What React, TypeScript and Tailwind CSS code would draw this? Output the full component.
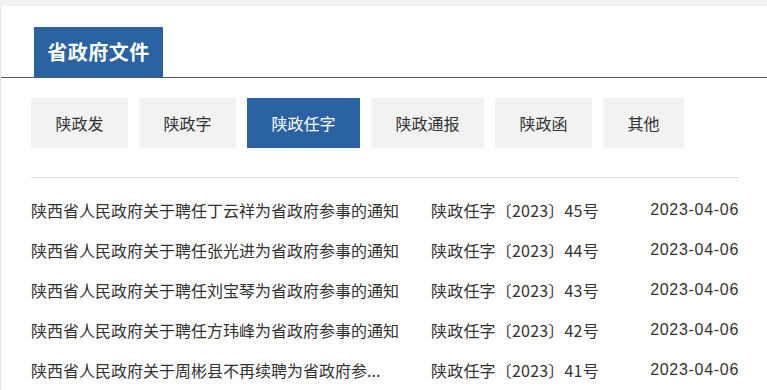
import { useState } from 'react'

const tabs = ['陕政发', '陕政字', '陕政任字', '陕政通报', '陕政函', '其他']

const docs = [
  { title: '陕西省人民政府关于聘任丁云祥为省政府参事的通知', no: '陕政任字〔2023〕45号', date: '2023-04-06' },
  { title: '陕西省人民政府关于聘任张光进为省政府参事的通知', no: '陕政任字〔2023〕44号', date: '2023-04-06' },
  { title: '陕西省人民政府关于聘任刘宝琴为省政府参事的通知', no: '陕政任字〔2023〕43号', date: '2023-04-06' },
  { title: '陕西省人民政府关于聘任方玮峰为省政府参事的通知', no: '陕政任字〔2023〕42号', date: '2023-04-06' },
  { title: '陕西省人民政府关于周彬县不再续聘为省政府参...', no: '陕政任字〔2023〕41号', date: '2023-04-06' },
]

export default function App() {
  const [active, setActive] = useState(2)

  return (
    <div
      className="w-[767px] h-[390px] overflow-hidden bg-[#f3f3f3] pt-[6px]"
      style={{ fontFamily: '"Microsoft YaHei", "Noto Sans CJK SC", sans-serif' }}
    >
      <div className="h-full bg-white border-l border-[#e6e6e6] pt-[21px]">
        {/* header */}
        <div className="border-b-[1.5px] border-[#4e5a66] pl-[33px]">
          <div className="w-[129px] h-[50px] bg-[#2a62a2] text-white text-[20px] font-bold flex items-center justify-center tracking-[0.5px]">
            省政府文件
          </div>
        </div>

        <div className="pl-[30px] pr-[28px]">
          {/* sub tabs */}
          <div className="flex gap-[11px] mt-[20px]">
            {tabs.map((t, i) => (
              <button
                key={t}
                onClick={() => setActive(i)}
                className={
                  i === active
                    ? 'h-[50px] px-[24.5px] text-[16px] bg-[#2a62a2] text-white'
                    : 'h-[50px] px-[24.5px] text-[16px] bg-[#f2f2f2] text-[#333]'
                }
              >
                {t}
              </button>
            ))}
          </div>

          <div className="mt-[29px] h-px bg-[#dcdcdc]" />

          {/* list */}
          <div className="pt-[12px]">
            {docs.map((d) => (
              <div key={d.no} className="flex items-center h-[40px] text-[16px] text-[#333]">
                <div className="w-[368px] whitespace-nowrap">{d.title}</div>
                <div className="ml-[32px] tracking-[0.2px]">{d.no}</div>
                <div
                  className="ml-auto tracking-[0.7px]"
                  style={{ fontFamily: '"Liberation Sans", "Noto Sans CJK SC", sans-serif' }}
                >
                  {d.date}
                </div>
              </div>
            ))}
          </div>
        </div>
      </div>
    </div>
  )
}
